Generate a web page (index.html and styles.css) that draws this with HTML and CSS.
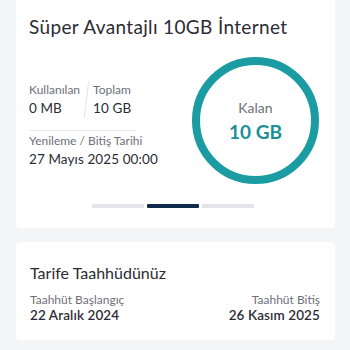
FILE: index.html
```html
<!DOCTYPE html>
<html lang="tr">
<head>
<meta charset="utf-8">
<link rel="stylesheet" href="styles.css">
</head>
<body>
<div class="page">
  <section class="card main">
    <h1 class="title">Süper Avantajlı 10GB İnternet</h1>
    <div class="usage">
      <div class="info">
        <div class="stats">
          <div class="stat">
            <div class="label">Kullanılan</div>
            <div class="value">0 MB</div>
          </div>
          <div class="vdiv"></div>
          <div class="stat">
            <div class="label">Toplam</div>
            <div class="value">10 GB</div>
          </div>
        </div>
        <div class="renew">
          <div class="label">Yenileme / Bitiş Tarihi</div>
          <div class="value">27 Mayıs 2025 00:00</div>
        </div>
      </div>
      <div class="ring">
        <div class="ring-label">Kalan</div>
        <div class="ring-value">10 GB</div>
      </div>
    </div>
    <div class="pager">
      <span class="bar"></span>
      <span class="bar active"></span>
      <span class="bar"></span>
    </div>
  </section>
  <section class="card commit">
    <h2 class="subtitle">Tarife Taahhüdünüz</h2>
    <div class="dates">
      <div class="date">
        <div class="label">Taahhüt Başlangıç</div>
        <div class="value strong">22 Aralık 2024</div>
      </div>
      <div class="date right">
        <div class="label">Taahhüt Bitiş</div>
        <div class="value strong">26 Kasım 2025</div>
      </div>
    </div>
  </section>
</div>
</body>
</html>
```

FILE: styles.css
```css
* { box-sizing: border-box; }
html, body { margin: 0; padding: 0; }
body {
  background: #f4f5f7;
  font-family: "Lato", "Open Sans", sans-serif;
  color: #2c2c34;
  width: 350px;
  height: 350px;
  overflow: hidden;
}
.page {
  display: flex;
  flex-direction: column;
  gap: 14px;
  padding: 0 15px 0 16px;
}
.card {
  background: #ffffff;
  border-radius: 4px;
}
.main {
  padding: 14px 16px 20px 13px;
  border-radius: 0 0 4px 4px;
}
.title {
  margin: 0;
  font-size: 19px;
  font-weight: 400;
  line-height: 26px;
  letter-spacing: 0.35px;
  color: #2c2c34;
}
.usage {
  display: flex;
  align-items: flex-start;
  margin-top: 17px;
}
.info {
  flex: 1;
  padding-top: 25px;
}
.stats {
  display: flex;
  align-items: stretch;
  width: 107px;
  padding-bottom: 12px;
  border-bottom: 1px solid #ececef;
}
.vdiv {
  width: 1px;
  background: #e3e3e7;
  margin: -1px 6px 0 6px;
  transform: skewX(-7deg);
}
.label {
  font-size: 12px;
  line-height: 16px;
  color: #6f6f78;
}
.value {
  font-size: 13.5px;
  line-height: 20px;
  margin-top: 0;
  color: #2c2c34;
  letter-spacing: 0.1px;
}
.renew { margin-top: 2px; }
.ring {
  width: 127px;
  height: 127px;
  border: 8px solid #1b9ca2;
  border-radius: 50%;
  display: flex;
  flex-direction: column;
  align-items: center;
  justify-content: center;
  flex: none;
}
.ring-label {
  font-size: 14px;
  line-height: 18px;
  color: #6f6f78;
}
.ring-value {
  font-size: 19px;
  line-height: 22px;
  font-weight: 700;
  color: #1b8f96;
  margin-top: 4px;
}
.pager {
  display: flex;
  justify-content: center;
  gap: 3px;
  margin-top: 20px;
  margin-left: -2px;
}
.bar {
  width: 52px;
  height: 4px;
  border-radius: 1px;
  background: #e3e4ea;
}
.bar.active { background: #0f2a4a; }
.commit {
  padding: 20px 15px 16px 14px;
}
.subtitle {
  margin: 0;
  font-size: 16px;
  font-weight: 400;
  line-height: 22px;
  color: #2c2c34;
}
.dates {
  display: flex;
  justify-content: space-between;
  margin-top: 8px;
}
.date.right { text-align: right; }
.strong {
  font-weight: 600;
  font-size: 13.5px;
  line-height: 18px;
  margin-top: -2px;
}
```
